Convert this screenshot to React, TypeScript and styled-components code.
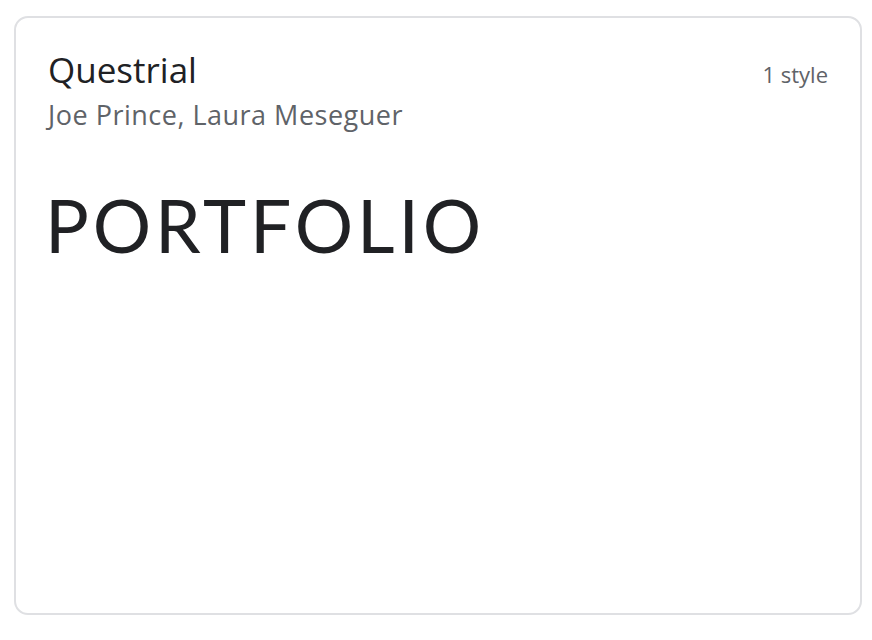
import styled, { createGlobalStyle } from "styled-components";

const GlobalStyle = createGlobalStyle`
  html, body {
    margin: 0;
    padding: 0;
    background: #fff;
  }
  body {
    font-family: "Open Sans", Roboto, "Liberation Sans", sans-serif;
  }
`;

const Page = styled.div`
  padding: 16px 10px 0 14px;
`;

const Card = styled.div`
  box-sizing: border-box;
  width: 848px;
  height: 599px;
  border: 2px solid #dfe0e3;
  border-radius: 14px;
  padding: 30px 32px 0 32px;
  display: flex;
  flex-direction: column;
`;

const Header = styled.div`
  display: flex;
  justify-content: space-between;
  align-items: flex-start;
`;

const Title = styled.div`
  font-size: 35px;
  line-height: 44px;
  color: #202124;
`;

const Designers = styled.div`
  margin-top: 6px;
  font-size: 27px;
  line-height: 34px;
  color: #5f6368;
  letter-spacing: 0.5px;
`;

const Styles = styled.div`
  font-size: 22px;
  line-height: 32px;
  margin-top: 10px;
  color: #5f6368;
`;

const Sample = styled.div`
  margin-top: 48px;
  font-family: Lato, "Noto Sans", sans-serif;
  font-size: 73px;
  line-height: 90px;
  letter-spacing: 3.9px;
  color: #202124;
  margin-left: -3px;
`;

type FontCardProps = {
  family: string;
  designers: string;
  styleCount: number;
  sample: string;
};

const FontCard = ({ family, designers, styleCount, sample }: FontCardProps) => (
  <Card>
    <Header>
      <div>
        <Title>{family}</Title>
        <Designers>{designers}</Designers>
      </div>
      <Styles>
        {styleCount} {styleCount === 1 ? "style" : "styles"}
      </Styles>
    </Header>
    <Sample>{sample}</Sample>
  </Card>
);

export default function App() {
  return (
    <>
      <GlobalStyle />
      <Page>
        <FontCard
          family="Questrial"
          designers="Joe Prince, Laura Meseguer"
          styleCount={1}
          sample="PORTFOLIO"
        />
      </Page>
    </>
  );
}
